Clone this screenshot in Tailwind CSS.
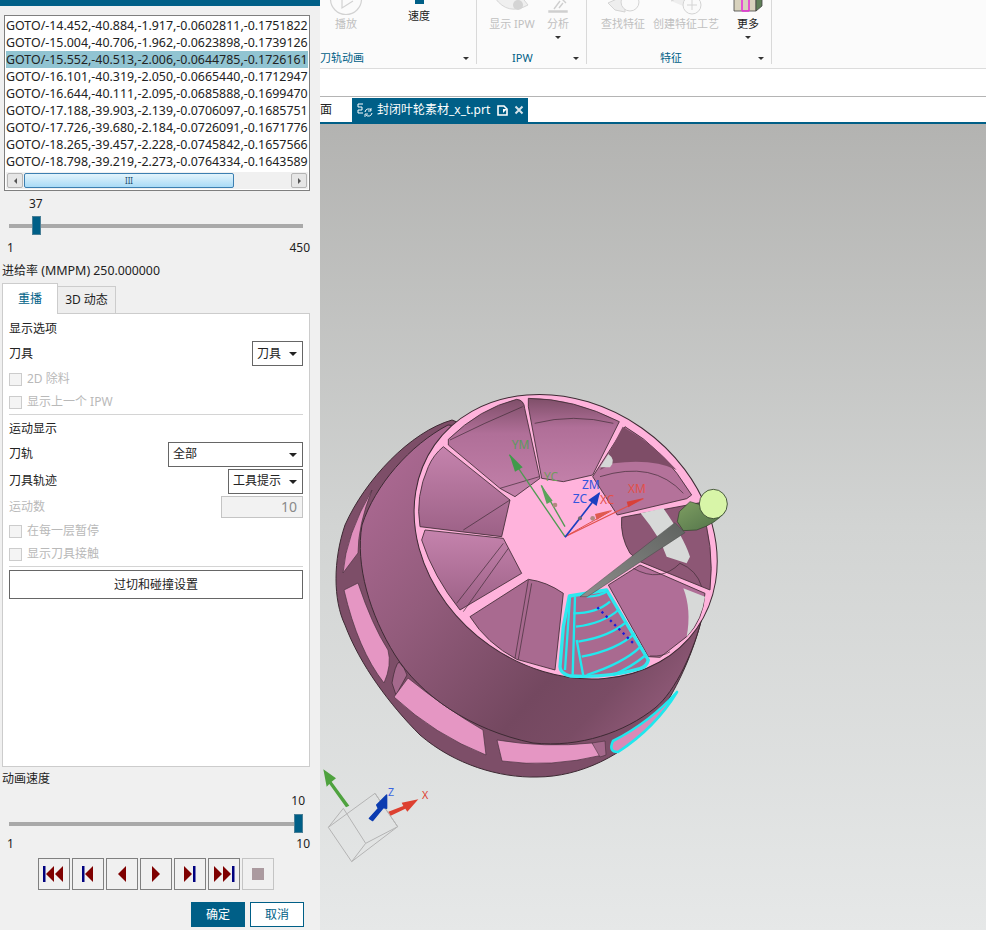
<!DOCTYPE html>
<html lang="zh-CN">
<head>
    <meta charset="UTF-8">
    <title>刀轨可视化</title>
    <script src="https://cdn.jsdelivr.net/npm/@tailwindcss/browser@4"></script>
</head>
<body class="bg-white">
<div class="flex w-[986px] h-[930px] overflow-hidden font-['Noto_Sans','Noto_Sans_CJK_SC',sans-serif] text-[12px] text-[#222]">

    <!-- Left dialog -->
    <div class="w-[320px] h-[930px] shrink-0 bg-[#f0f0f0] flex flex-col">
        <div class="h-[6px] bg-[#005f87]"></div>

        <!-- GOTO list -->
        <div class="mt-[9px] ml-[4px] w-[306px] h-[176px] border border-[#7f7f7f] bg-white p-px flex flex-col">
            <div class="h-[153px] text-[12.4px] leading-[17px] whitespace-nowrap overflow-hidden">
                <div class="h-[17px]">GOTO/-14.452,-40.884,-1.917,-0.0602811,-0.1751822</div>
                <div class="h-[17px]">GOTO/-15.004,-40.706,-1.962,-0.0623898,-0.1739126</div>
                <div class="h-[17px] bg-[#91c4d2]">GOTO/-15.552,-40.513,-2.006,-0.0644785,-0.1726161</div>
                <div class="h-[17px]">GOTO/-16.101,-40.319,-2.050,-0.0665440,-0.1712947</div>
                <div class="h-[17px]">GOTO/-16.644,-40.111,-2.095,-0.0685888,-0.1699470</div>
                <div class="h-[17px]">GOTO/-17.188,-39.903,-2.139,-0.0706097,-0.1685751</div>
                <div class="h-[17px]">GOTO/-17.726,-39.680,-2.184,-0.0726091,-0.1671776</div>
                <div class="h-[17px]">GOTO/-18.265,-39.457,-2.228,-0.0745842,-0.1657566</div>
                <div class="h-[17px]">GOTO/-18.798,-39.219,-2.273,-0.0764334,-0.1643589</div>
            </div>
            <div class="mt-[3px] h-[17px] bg-[#f0f0f0] flex items-center px-px">
                <div class="w-[16px] h-[15px] bg-[#e6e6e6] border border-[#b5b5b5] rounded-[2px] flex items-center justify-center">
                    <div class="w-0 h-0 border-y-[3px] border-y-transparent border-r-[3px] border-r-[#555]"></div>
                </div>
                <div class="ml-[1px] w-[210px] h-[15px] rounded-[2px] border border-[#3c7fb1] bg-linear-to-b from-[#e3f4fc] to-[#a9dbf6] flex items-center justify-center text-[8px] leading-none text-[#1f4e70]">III</div>
                <div class="flex-1"></div>
                <div class="w-[16px] h-[15px] bg-[#e6e6e6] border border-[#b5b5b5] rounded-[2px] flex items-center justify-center">
                    <div class="w-0 h-0 border-y-[3px] border-y-transparent border-l-[3px] border-l-[#555]"></div>
                </div>
            </div>
        </div>

        <!-- Position slider -->
        <div class="mt-[5px] h-[16px] leading-[16px] pl-[29px]">37</div>
        <div class="mt-[4px] ml-[9px] w-[294px] h-[19px] relative flex items-center">
            <div class="w-full h-[4px] bg-[#a9a9a9]"></div>
            <div class="absolute left-[23px] top-0 w-[9px] h-[19px] bg-[#005f87] border border-[#4a7f96]"></div>
        </div>
        <div class="mt-[5px] h-[16px] leading-[16px] flex justify-between pl-[7px] pr-[10px]"><span>1</span><span>450</span></div>
        <div class="mt-[7px] h-[16px] leading-[16px] pl-[2px] whitespace-nowrap">进给率 <span class="text-[12.5px]">(MMPM)</span> <span class="text-[12.3px]">250.000000</span></div>

        <!-- Tabs -->
        <div class="mt-[4px] ml-[2px] flex items-end h-[31px] relative z-10">
            <div class="w-[56px] h-[31px] bg-white border border-[#ccc] border-b-0 flex items-center justify-center text-[#005f87]">重播</div>
            <div class="w-[58px] h-[28px] bg-[#eeeeee] border border-l-0 border-[#ccc] flex items-center justify-center">3D 动态</div>
        </div>

        <!-- Tab body -->
        <div class="-mt-px ml-[2px] w-[308px] h-[454px] bg-white border border-[#ccc] px-[6px] flex flex-col">
            <div class="mt-[7px] h-[16px] leading-[16px]">显示选项</div>
            <div class="mt-[4px] h-[25px] flex items-center justify-between">
                <span>刀具</span>
                <div class="w-[51px] h-[25px] border border-[#666] flex items-center justify-between pl-[4px] pr-[5px]">刀具<div class="w-0 h-0 border-x-[4px] border-x-transparent border-t-[4px] border-t-[#222]"></div></div>
            </div>
            <div class="mt-[5px] h-[16px] flex items-center gap-[5px] text-[#b9b9b9]"><div class="w-[13px] h-[13px] border border-[#ccc] bg-[#f4f4f4]"></div>2D 除料</div>
            <div class="mt-[7px] h-[16px] flex items-center gap-[5px] text-[#b9b9b9]"><div class="w-[13px] h-[13px] border border-[#ccc] bg-[#f4f4f4]"></div>显示上一个 IPW</div>
            <div class="mt-[4px] h-px bg-[#d4d4d4]"></div>
            <div class="mt-[6px] h-[16px] leading-[16px]">运动显示</div>
            <div class="mt-[5px] h-[25px] flex items-center justify-between">
                <span class="-mt-px">刀轨</span>
                <div class="w-[135px] h-[25px] border border-[#666] flex items-center justify-between pl-[4px] pr-[5px]"><span class="-mt-px">全部</span><div class="w-0 h-0 border-x-[4px] border-x-transparent border-t-[4px] border-t-[#222]"></div></div>
            </div>
            <div class="mt-[2px] h-[25px] flex items-center justify-between">
                <span class="-mt-px">刀具轨迹</span>
                <div class="w-[75px] h-[25px] border border-[#666] flex items-center justify-between pl-[4px] pr-[5px]"><span class="-mt-px">工具提示</span><div class="w-0 h-0 border-x-[4px] border-x-transparent border-t-[4px] border-t-[#222]"></div></div>
            </div>
            <div class="mt-[2px] h-[22px] flex items-center justify-between text-[#b9b9b9]">
                <span>运动数</span>
                <div class="w-[82px] h-[22px] border border-[#c4c4c4] bg-[#f2f2f2] text-right pr-[5px] text-[14px] leading-[20px] text-[#8a8a8a]">10</div>
            </div>
            <div class="mt-[5px] h-[16px] flex items-center gap-[5px] text-[#b9b9b9]"><div class="w-[13px] h-[13px] border border-[#ccc] bg-[#f4f4f4]"></div>在每一层暂停</div>
            <div class="mt-[7px] h-[16px] flex items-center gap-[5px] text-[#b9b9b9]"><div class="w-[13px] h-[13px] border border-[#ccc] bg-[#f4f4f4]"></div>显示刀具接触</div>
            <div class="mt-[4px] h-px bg-[#d4d4d4]"></div>
            <div class="mt-[3px] h-[29px] border border-[#666] flex items-center justify-center">过切和碰撞设置</div>
        </div>

        <!-- Speed slider -->
        <div class="mt-[4px] h-[16px] leading-[16px] pl-[2px]">动画速度</div>
        <div class="mt-[6px] h-[16px] leading-[16px] text-right pr-[15px]">10</div>
        <div class="mt-[5px] ml-[9px] w-[294px] h-[19px] relative flex items-center">
            <div class="w-full h-[4px] bg-[#a9a9a9]"></div>
            <div class="absolute right-0 top-0 w-[9px] h-[19px] bg-[#005f87] border border-[#4a7f96]"></div>
        </div>
        <div class="mt-[3px] h-[16px] leading-[16px] flex justify-between pl-[7px] pr-[10px]"><span>1</span><span>10</span></div>

        <!-- Playback buttons -->
        <div class="mt-[6px] ml-[38px] flex gap-[2px]">
            <div class="w-[32px] h-[32px] border border-[#808080] flex items-center justify-center">
                <svg width="22" height="16" viewBox="0 0 22 16"><rect x="0" y="0" width="2.5" height="16" fill="#00007f"/><path d="M11 0V16L3 8Z M20 0V16L12 8Z" fill="#7f0000"/></svg>
            </div>
            <div class="w-[32px] h-[32px] border border-[#808080] flex items-center justify-center">
                <svg width="12" height="16" viewBox="0 0 12 16"><rect x="0" y="0" width="2.5" height="16" fill="#00007f"/><path d="M11 0V16L3 8Z" fill="#7f0000"/></svg>
            </div>
            <div class="w-[32px] h-[32px] border border-[#808080] flex items-center justify-center">
                <svg width="8" height="16" viewBox="0 0 8 16"><path d="M8 0V16L0 8Z" fill="#7f0000"/></svg>
            </div>
            <div class="w-[32px] h-[32px] border border-[#808080] flex items-center justify-center">
                <svg width="8" height="16" viewBox="0 0 8 16"><path d="M0 0V16L8 8Z" fill="#7f0000"/></svg>
            </div>
            <div class="w-[32px] h-[32px] border border-[#808080] flex items-center justify-center">
                <svg width="12" height="16" viewBox="0 0 12 16"><path d="M0 0V16L8 8Z" fill="#7f0000"/><rect x="9" y="0" width="2.5" height="16" fill="#00007f"/></svg>
            </div>
            <div class="w-[32px] h-[32px] border border-[#808080] flex items-center justify-center">
                <svg width="21" height="16" viewBox="0 0 21 16"><path d="M0 0V16L8 8Z M9 0V16L17 8Z" fill="#7f0000"/><rect x="18" y="0" width="2.5" height="16" fill="#00007f"/></svg>
            </div>
            <div class="w-[32px] h-[32px] border border-[#c4c4c4] flex items-center justify-center">
                <div class="w-[12px] h-[12px] bg-[#ab9a9f]"></div>
            </div>
        </div>

        <!-- OK / Cancel -->
        <div class="mt-[12px] ml-[191px] flex gap-[5px]">
            <div class="w-[54px] h-[25px] bg-[#005f87] text-white flex items-center justify-center">确定</div>
            <div class="w-[54px] h-[25px] bg-white border border-[#005f87] text-[#005f87] flex items-center justify-center">取消</div>
        </div>
    </div>

    <!-- Right side -->
    <div class="w-[666px] h-[930px] flex flex-col">
        <!-- Ribbon -->
        <div class="h-[69px] shrink-0 bg-[#fbfbfb] border-b border-[#dcdcdc] flex overflow-hidden">
            <!-- 刀轨动画 -->
            <div class="w-[157px] h-[64px] border-r border-[#d9d9d9] flex flex-col">
                <div class="h-[52px] flex">
                    <div class="w-[52px] flex flex-col items-center">
                        <svg width="34" height="16" viewBox="0 0 34 16" fill="none" stroke="#d2d2d2" stroke-width="1.2"><circle cx="17" cy="-1" r="15.5"/><path d="M13 -3V8L24 1"/></svg>
                        <div class="h-[16px] leading-[16px] text-[11px] text-[#c0c0c0]">播放</div>
                    </div>
                    <div class="w-[94px] flex flex-col items-center">
                        <div class="w-[9px] h-[4px] bg-[#005f87]"></div>
                        <div class="mt-[4px] h-[16px] leading-[16px] text-[11px]">速度</div>
                    </div>
                </div>
                <div class="h-[12px] flex items-center justify-between pr-[7px] text-[11px] text-[#005f87]">
                    <span>刀轨动画</span>
                    <div class="w-0 h-0 border-x-[3.5px] border-x-transparent border-t-[3.5px] border-t-[#333]"></div>
                </div>
            </div>
            <!-- IPW -->
            <div class="w-[110px] h-[64px] border-r border-[#d9d9d9] flex flex-col">
                <div class="h-[52px] flex pl-[12px]">
                    <div class="w-[46px] flex flex-col items-center">
                        <svg width="36" height="16" viewBox="0 0 36 16"><path d="M1 -2Q14 16 34 5Q26 -6 20 -8" fill="#efefef" stroke="#d6d6d6"/><circle cx="24" cy="5" r="5" fill="#d4d4d4"/></svg>
                        <div class="h-[16px] leading-[16px] text-[11px] text-[#c0c0c0] whitespace-nowrap">显示 IPW</div>
                    </div>
                    <div class="w-[46px] flex flex-col items-center">
                        <svg width="22" height="16" viewBox="0 0 22 16" fill="none" stroke="#cfcfcf" stroke-width="1.4"><path d="M2 11H20V12H2Z M7 9L13 1M12 8L16 3M15 -1L19 3"/></svg>
                        <div class="h-[16px] leading-[16px] text-[11px] text-[#c0c0c0]">分析</div>
                        <div class="mt-[4px] w-0 h-0 border-x-[3.5px] border-x-transparent border-t-[3.5px] border-t-[#333]"></div>
                    </div>
                </div>
                <div class="h-[12px] flex items-center text-[11px] text-[#005f87] pr-[7px]">
                    <span class="ml-[35px]">IPW</span>
                    <div class="ml-auto w-0 h-0 border-x-[3.5px] border-x-transparent border-t-[3.5px] border-t-[#333]"></div>
                </div>
            </div>
            <!-- 特征 -->
            <div class="w-[185px] h-[64px] border-r border-[#d9d9d9] flex flex-col">
                <div class="h-[52px] flex pl-[11px]">
                    <div class="w-[50px] flex flex-col items-center">
                        <svg width="36" height="16" viewBox="0 0 36 16" fill="none" stroke="#d4d4d4"><path d="M3 3L14 -2L20 4V12L10 10Z" fill="#eee"/><circle cx="25" cy="2" r="9" fill="#fafafa"/></svg>
                        <div class="h-[16px] leading-[16px] text-[11px] text-[#c0c0c0] whitespace-nowrap">查找特征</div>
                    </div>
                    <div class="w-[76px] flex flex-col items-center">
                        <svg width="36" height="16" viewBox="0 0 36 16" fill="none" stroke="#d4d4d4"><path d="M3 1L12 -3L20 3V8" fill="#eee"/><circle cx="24" cy="5" r="9" fill="#fafafa"/><path d="M24 0V10M19 5H29"/></svg>
                        <div class="h-[16px] leading-[16px] text-[11px] text-[#c0c0c0] whitespace-nowrap">创建特征工艺</div>
                    </div>
                    <div class="ml-[2px] w-[44px] flex flex-col items-center">
                        <svg width="30" height="16" viewBox="0 0 30 16"><path d="M1 -4H23V11H1Z" fill="#d8d2bd" stroke="#444" stroke-width=".8"/><path d="M23 11L29 6V-6H23Z" fill="#5f7f58" stroke="#444" stroke-width=".8"/><path d="M9 -4V11M16 -4V11M9 11H16" fill="none" stroke="#e832d8" stroke-width="1.6"/></svg>
                        <div class="h-[16px] leading-[16px] text-[11px]">更多</div>
                        <div class="mt-[4px] w-0 h-0 border-x-[3.5px] border-x-transparent border-t-[3.5px] border-t-[#333]"></div>
                    </div>
                </div>
                <div class="h-[12px] flex items-center text-[11px] text-[#005f87] pr-[7px]">
                    <span class="ml-[73px]">特征</span>
                    <div class="ml-auto w-0 h-0 border-x-[3.5px] border-x-transparent border-t-[3.5px] border-t-[#333]"></div>
                </div>
            </div>
        </div>

        <!-- Empty strip -->
        <div class="h-[28px] shrink-0 bg-white border-b-[1px] border-[#b4b4b4]"></div>

        <!-- Tabs strip -->
        <div class="h-[25px] shrink-0 bg-white flex items-end">
            <div class="w-[32px] h-[24px] leading-[24px] text-[12px] overflow-hidden">面</div>
            <div class="w-[176px] h-[24px] bg-[#005f87] text-white flex items-center pl-[5px] gap-[4px] text-[12px]">
                <svg width="16" height="15" viewBox="0 0 16 15" fill="none" stroke="#fff" stroke-width="1"><path d="M6 1H1V4H5V7H1V10H6"/><path d="M8 9A3.5 3.5 0 0 1 14 7M15 10A3.5 3.5 0 0 1 9 12"/><path d="M14 5V8H11M8 14V11H11" stroke-width=".9"/></svg>
                <span class="whitespace-nowrap">封闭叶轮素材_x_t.prt</span>
                <svg class="ml-[3px]" width="11" height="11" viewBox="0 0 11 11"><path d="M1 1H7L10 4V10H1Z" fill="none" stroke="#fff" stroke-width="1.6"/><path d="M6 4H10L6 8Z" fill="#fff"/></svg>
                <svg class="ml-[2px]" width="10" height="10" viewBox="0 0 10 10"><path d="M1.5 1.5L8.5 8.5M8.5 1.5L1.5 8.5" stroke="#d5e3ea" stroke-width="2"/></svg>
            </div>
        </div>
        <div class="h-[2px] shrink-0 bg-[#005f87]"></div>

        <!-- Graphics window -->
        <div class="flex-1 relative bg-linear-to-b from-[#b3b3b1] via-[#d2d4d3] via-50% to-[#e6e8e8]">
            <svg class="absolute left-0 top-0" width="666" height="806" viewBox="320 124 666 806">
                <defs>
                    <linearGradient id="bowl" gradientUnits="userSpaceOnUse" x1="370" y1="500" x2="640" y2="740">
                        <stop offset="0" stop-color="#a8678f"/>
                        <stop offset="0.3" stop-color="#935c7c"/>
                        <stop offset="0.7" stop-color="#744860"/>
                        <stop offset="0.85" stop-color="#7a4c65"/>
                        <stop offset="1" stop-color="#8f5977"/>
                    </linearGradient>
                    <linearGradient id="pocket" x1="0" y1="0" x2="0" y2="1">
                        <stop offset="0" stop-color="#c583ad"/>
                        <stop offset="1" stop-color="#9c6186"/>
                    </linearGradient>
                    <linearGradient id="pocketDark" x1="0" y1="0" x2="0" y2="1">
                        <stop offset="0" stop-color="#7f4f69"/>
                        <stop offset="0.35" stop-color="#b06f98"/>
                        <stop offset="1" stop-color="#c280a9"/>
                    </linearGradient>
                    <linearGradient id="needle" x1="0" y1="1" x2="1" y2="0">
                        <stop offset="0" stop-color="#8d8d8b"/>
                        <stop offset="1" stop-color="#5f6360"/>
                    </linearGradient>
                    <linearGradient id="holder" x1="0" y1="0" x2="1" y2="1">
                        <stop offset="0" stop-color="#7f9f62"/>
                        <stop offset="1" stop-color="#4f7048"/>
                    </linearGradient>
                </defs>

                <!-- Rear rim -->
                <path d="M452 420C410 432 365 480 345 525C333 560 333 600 345 625C360 665 390 705 420 735C455 765 500 778 537 777C580 777 625 755 653 722C675 695 695 650 703 613L600 480Z" fill="#7d4e68" stroke="#3d2a33" stroke-width="1"/>

                <!-- Rear windows -->
                <path d="M343 573Q346 535 372 490Q358 525 358 553Z" fill="#e08fbd" stroke="#4b3340" stroke-width=".7"/>
                <path d="M344 590L358 583Q372 625 388 650Q392 665 384 683Q358 650 344 590Z" fill="#e596c3" stroke="#4b3340" stroke-width=".7"/>
                <path d="M392 683Q395 665 399 662Q405 668 407 675L396 695Z" fill="#a5698c" stroke="#3d2a33" stroke-width=".7"/>
                <path d="M394 697L408 678Q445 708 483 730L486 755Q435 735 394 697Z" fill="#e596c3" stroke="#4b3340" stroke-width=".7"/>
                <path d="M497 740Q545 748 592 743L603 755Q550 768 502 761Z" fill="#e596c3" stroke="#4b3340" stroke-width=".7"/>
                <path d="M592 743L605 741L606 755L600 757Z" fill="#a5698c" stroke="#3d2a33" stroke-width=".5"/>

                <!-- Bowl -->
                <path d="M448 425C410 445 375 485 362 525C355 565 370 615 395 655C420 695 470 730 533 743C580 748 625 732 655 708C675 692 695 650 703 613L715 560L600 440Z" fill="url(#bowl)" stroke="#3d2a33" stroke-width="1"/>

                <!-- Cyan toolpath on the rim -->
                <path d="M613 741Q650 722 677 692Q655 728 618 752Q608 752 613 741Z" fill="#d98ab7" stroke="#1fe8ee" stroke-width="2.6" stroke-linejoin="round"/>

                <!-- Front face -->
                <g transform="translate(400 380) scale(0.33333)">
                    <ellipse cx="497" cy="470" rx="480" ry="398" transform="rotate(35 497 470)" fill="#ffb3dc" stroke="#3d2a33" stroke-width="3"/>
                    <g stroke="#3d2a33" stroke-width="2.5" stroke-linejoin="round">
                        <path d="M145 178Q240 85 350 58Q372 60 374 85L420 295L345 350L300 325L145 195Z" fill="url(#pocketDark)"/>
                        <path d="M385 55Q520 55 658 125L578 285L490 305L425 295L385 80Z" fill="url(#pocketDark)"/>
                        <path d="M675 140Q790 205 875 345L860 356L652 405L578 290Z" fill="#b4729a"/>
                        <path d="M668 140Q760 190 830 270Q760 235 640 250L600 270Z" fill="#7e4d67" stroke="none"/>
                        <path d="M625 222Q650 240 630 262L600 262Z" fill="#d5d7d6" stroke="none"/>
                        <path d="M665 412L900 368Q945 500 930 630L720 545L690 520Q660 470 665 412Z" fill="#8d5775"/>
                        <path d="M722 400L790 385Q850 470 870 530L860 550L800 530Q780 470 722 400Z" fill="#d7d9d8" stroke="none"/>
                        <path d="M720 555L915 640Q910 720 860 770L780 832L745 830L625 615Z" fill="#b06e97"/>
                        <path d="M850 625L915 650Q905 720 860 770Q875 690 850 625Z" fill="#d7d9d8" stroke="none"/>
                        <path d="M210 710L385 598Q440 605 490 640L465 870L350 838Q260 790 210 710Z" fill="#a96a90"/>
                        <path d="M75 450L310 475L365 580L180 690Q100 590 65 480Z" fill="url(#pocket)"/>
                        <path d="M130 200L330 360L305 470L60 440Q45 350 85 260Q100 225 130 200Z" fill="url(#pocket)"/>
                    </g>
                    <g fill="none" stroke="#3d2a33" stroke-width="2">
                        <path d="M150 180Q250 130 368 80"/>
                        <path d="M300 325L418 290"/>
                        <path d="M404 130Q520 100 640 130"/>
                        <path d="M190 450L330 360"/>
                        <path d="M170 670L310 490M190 695L325 505"/>
                        <path d="M345 835L385 600M355 838L395 610"/>
                        <path d="M600 290Q760 240 850 340"/>
                        <path d="M700 565Q780 610 840 550Q890 570 905 620"/>
                        <path d="M750 828Q790 830 810 815"/>
                    </g>

                    <!-- Toolpath pocket -->
                    <path d="M508 648Q560 640 620 630L745 840Q740 860 720 866Q620 895 510 888Q480 880 480 860L490 740Z" fill="#a96a90" stroke="#2fe8ee" stroke-width="10" stroke-linejoin="round"/>
                    <g fill="none" stroke="#22e8ee" stroke-width="7">
                        <path d="M510 650L495 870M525 650L518 885M530 780L550 888"/>
                        <path d="M560 650Q600 650 625 632"/>
                        <path d="M520 700Q590 700 630 665"/>
                        <path d="M528 740Q610 730 655 690"/>
                        <path d="M535 785Q630 770 680 725"/>
                        <path d="M545 830Q650 810 705 760"/>
                        <path d="M560 885Q670 850 722 800"/>
                        <path d="M640 885Q695 860 738 825"/>
                    </g>
                    <path d="M592 682L700 790" stroke="#1a1ad8" stroke-width="7" stroke-dasharray="7 11" fill="none"/>

                    <!-- Tool -->
                    <path d="M825 428L855 458L562 650L540 650Z" fill="url(#needle)" stroke="#444" stroke-width="1.5"/>
                    <path d="M870 365L975 395Q950 430 890 450L850 452L832 425L838 395Z" fill="url(#holder)" stroke="#2f3f2a" stroke-width="2"/>
                    <ellipse cx="940" cy="372" rx="42" ry="44" fill="#d8f5a8" stroke="#2f3f2a" stroke-width="2.5"/>

                    <!-- Work coordinate systems -->
                    <path d="M495 470L328 225" stroke="#4f9a52" stroke-width="4"/>
                    <path d="M328 222L368 262L345 275Z" fill="#3f9a4a"/>
                    <path d="M495 440L424 316" stroke="#4f9a52" stroke-width="4"/>
                    <path d="M422 314L458 362L440 372Z" fill="#5ba35b"/>
                    <circle cx="465" cy="375" r="7" fill="#b08a80"/>
                    <path d="M495 470L730 356" stroke="#e2504a" stroke-width="3.5"/>
                    <path d="M732 354L685 382L680 365Z" fill="#d8403a"/>
                    <path d="M495 470L635 392" stroke="#e2504a" stroke-width="3"/>
                    <path d="M635 390L590 420L585 402Z" fill="#e05a50"/>
                    <circle cx="578" cy="415" r="7" fill="#b08a80"/>
                    <path d="M495 472L598 340" stroke="#1a3fc0" stroke-width="5"/>
                    <path d="M600 336L590 378L565 360Z" fill="#1a3fc0"/>
                    <circle cx="540" cy="415" r="6" fill="#6b6a70"/>
                    <text x="335" y="208" font-size="36" fill="#5d9a5d">YM</text>
                    <text x="432" y="302" font-size="36" fill="#6f9a5d">YC</text>
                    <text x="546" y="328" font-size="36" fill="#3355dd">ZM</text>
                    <text x="518" y="370" font-size="36" fill="#3355dd">ZC</text>
                    <text x="600" y="372" font-size="36" fill="#e2504a">XC</text>
                    <text x="684" y="338" font-size="36" fill="#e2504a">XM</text>
                </g>

                <!-- View triad -->
                <g transform="translate(320 640) scale(0.33333)">
                    <path d="M25 562L165 460L233 560L95 665Z M70 505L137 610L233 560 M137 610L95 665 M70 505L25 562 M165 460L233 560" fill="none" stroke="#b4b4b4" stroke-width="3"/>
                    <path d="M88 497L35 425L48 415L10 388L20 440L28 432L78 502Z" fill="#4ea23e"/>
                    <path d="M205 515L250 498L245 488L295 478L262 515L256 506L212 527Z" fill="#dd4030"/>
                    <path d="M148 535L175 505L170 495L200 465L200 505L190 503L158 542Z" fill="#0c3cb0" stroke="#0c3cb0" stroke-width="4" stroke-linejoin="round"/>
                    <text x="204" y="468" font-size="32" fill="#3a66e0">Z</text>
                    <text x="306" y="478" font-size="32" fill="#dd4030">X</text>
                </g>
            </svg>
        </div>
    </div>
</div>
</body>
</html>
